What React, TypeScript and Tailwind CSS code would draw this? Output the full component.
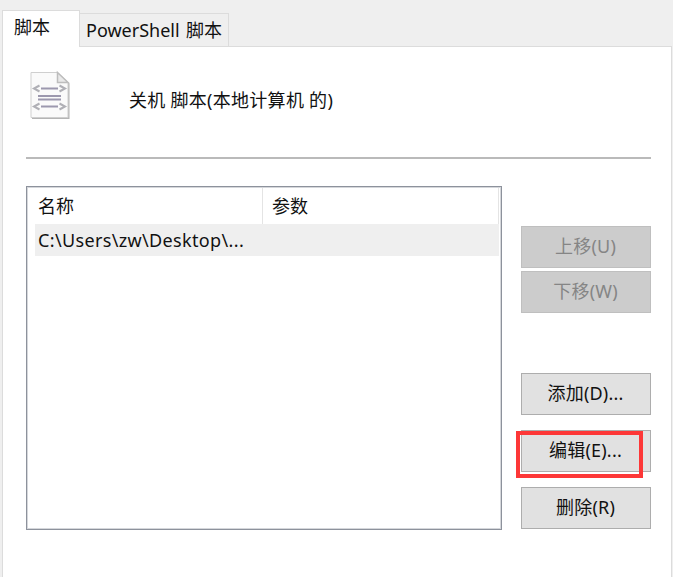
import clsx from "clsx";

const ScriptIcon = () => (
  <svg width="42" height="50" viewBox="0 0 42 50" fill="none">
    <path d="M2 3.5H28.5L39.5 13.5V49H2Z" fill="#b4b4b4" />
    <path d="M1 2.5H27.5L38 12.5V47.5H1Z" fill="#fafafa" stroke="#cfcfcf" />
    <path d="M27.5 2.5V12.5H38Z" fill="#e9e9e9" stroke="#bdbdbd" strokeWidth="1.5" />
    <g stroke="#9c98ae" strokeWidth="2">
      <path d="M9.5 15.5L4 18.5L9.5 21.5M29.5 15.5L35 18.5L29.5 21.5" stroke="#b0b0b6" />
      <path d="M9.5 33.5L4 36.5L9.5 39.5M29.5 33.5L35 36.5L29.5 39.5" stroke="#b0b0b6" />
      <path d="M11 18.5H28M8 26H31M8 29.5H31M11 36.5H28" />
    </g>
  </svg>
);

type ActionButtonProps = {
  label: string;
  shortcut: string;
  disabled?: boolean;
  highlighted?: boolean;
  className?: string;
};

const ActionButton = ({ label, shortcut, disabled, highlighted, className }: ActionButtonProps) => (
  <div className={clsx("relative h-[42px] w-[130px]", className)}>
    <button
      disabled={disabled}
      className={clsx(
        "flex h-full w-full items-center justify-center border pb-[3px] pr-px leading-6 tracking-[0.2px]",
        disabled ? "border-[#bfbfbf] bg-[#cccccc] text-[#858585]" : "border-[#adadad] bg-[#e1e1e1]"
      )}
    >
      <span>{label}</span>
      <span>{shortcut}</span>
    </button>
    {highlighted && (
      <div className="absolute -left-[5px] top-px h-[47px] w-[127px] border-4 border-[#fd3737]" />
    )}
  </div>
);

const App = () => {
  return (
    <div className="flex h-[577px] w-[673px] flex-col overflow-hidden bg-[#efefef] pl-[2px] font-['Noto_Sans','Noto_Sans_CJK_SC',sans-serif] text-[18px] leading-6 text-[#111111]">
      <div className="flex h-[46px] shrink-0 items-end">
        <div className="relative z-10 -mb-px h-[37px] w-[78px] border border-b-0 border-[#dcdcdc] bg-white pl-[11px] pt-[4px]">
          脚本
        </div>
        <div className="flex h-[33px] w-[149px] items-center whitespace-nowrap border border-b-0 border-l-0 border-[#dcdcdc] pb-px pl-[6px]">
          <span className="w-[100px]">PowerShell</span>
          <span>脚本</span>
        </div>
      </div>

      <div className="w-[670px] flex-1 border border-b-0 border-[#dcdcdc] bg-white pl-[23px] pr-[20px]">
        <div className="flex h-[112px] border-b-2 border-[#bababa] pl-[4px] pt-[23px]">
          <ScriptIcon />
          <p className="ml-[57px] mt-[18px] whitespace-nowrap tracking-[0.28px]">
            关机 脚本(本地计算机 的)
          </p>
        </div>

        <div className="mt-[27px] flex justify-between">
          <div className="h-[344px] w-[476px] border border-[#8d929c] p-px shadow-[inset_0_0_0_1px_#d5d7db]">
            <div className="flex h-[36px]">
              <div className="w-[235px] border-r border-[#e4e4e4] pl-[10px] pt-[6px]">名称</div>
              <div className="w-[236px] border-r border-[#e4e4e4] pl-[9px] pt-[6px]">参数</div>
            </div>
            <div className="ml-[7px] mr-px h-[32px] bg-[#efefef] pl-[3px] pt-[4px] tracking-[0.35px]">
              C:\Users\zw\Desktop\...
            </div>
          </div>

          <div className="flex flex-col pt-[40px]">
            <ActionButton label="上移" shortcut="(U)" disabled />
            <ActionButton label="下移" shortcut="(W)" disabled className="mt-[3px]" />
            <ActionButton label="添加" shortcut="(D)..." className="mt-[60px]" />
            <ActionButton label="编辑" shortcut="(E)..." highlighted className="mt-[15px]" />
            <ActionButton label="删除" shortcut="(R)" className="mt-[15px]" />
          </div>
        </div>
      </div>
    </div>
  );
};

export default App;
